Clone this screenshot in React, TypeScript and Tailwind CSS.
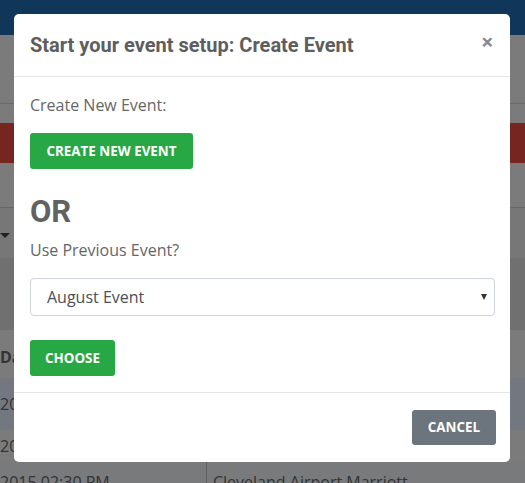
import React from "react";

export default function App() {
  return (
    <div className="relative w-[525px] h-[483px] overflow-hidden bg-[#7b7b7b] font-['Open_Sans',sans-serif]">
      {/* background page (dimmed) */}
      <div className="flex flex-col">
        <div className="h-[35px] bg-[#10375a]" />
        <div className="h-[69px] bg-[#7b7b7b] border-b border-[#6a6a6a]" />
        <div className="h-[19px] bg-[#7b7b7b]" />
        <div className="h-[40px] bg-[#772520]" />
        <div className="h-[45px] bg-[#7b7b7b] border-b border-[#666]" />
        <div className="h-[50px] bg-[#777] relative">
          <div className="absolute left-0 top-[25px] w-0 h-0 border-l-[5px] border-r-[5px] border-t-[5px] border-l-transparent border-r-transparent border-t-[#222]" />
        </div>
        <div className="h-[72px] bg-[#707070]" />
        <div className="h-[48px] bg-[#7b7b7b] flex items-center text-[16px] font-bold text-[#333] pt-[6px]">Da</div>
        <div className="h-[52px] bg-[#737880] flex items-center text-[16px] text-[#333]">20</div>
        <div className="h-[32px] bg-[#7b7b7b] flex items-center text-[16px] text-[#333]">20</div>
        <div className="h-[21px] bg-[#787a7b] flex text-[16px] text-[#333]">
          <div className="w-[207px] border-r border-[#5f5f5f] pt-[12px] leading-none">2015 02:30 PM</div>
          <div className="pl-[6px] pt-[12px] leading-none">Cleveland Airport Marriott</div>
        </div>
      </div>

      {/* modal */}
      <div className="absolute left-[14px] top-[14px] w-[496px] h-[448px] bg-white rounded-[5px] flex flex-col">
        <div className="h-[63px] border-b border-[#e5e5e5] flex items-center justify-between px-[16px]">
          <div className="font-['Roboto',sans-serif] font-bold text-[20px] text-[#5e5e5e]">Start your event setup: Create Event</div>
          <div className="text-[#8a8a8a] text-[21px] font-bold leading-none mr-[1px] mt-[-6px] font-['Roboto',sans-serif]">×</div>
        </div>
        <div className="pl-[16px] pr-[15px] pt-[16px] pb-[16px] border-b border-[#e5e5e5]">
          <div className="text-[16px] text-[#666] leading-[24px]">Create New Event:</div>
          <button className="block mt-[16px] h-[36px] px-[16.5px] bg-[#28a745] text-white text-[13.4px] font-bold rounded-[3px]">CREATE NEW EVENT</button>
          <div className="mt-[25px] font-['Roboto',sans-serif] font-bold text-[31px] leading-[36px] text-[#626262]">OR</div>
          <div className="mt-[8px] text-[16px] text-[#666] leading-[24px]">Use Previous Event?</div>
          <div className="mt-[16px] h-[38px] border border-[#ced4da] rounded-[4px] flex items-center justify-between pl-[16px] pr-[7px]">
            <span className="text-[16px] text-[#495057]">August Event</span>
            <span className="w-0 h-0 border-l-[3px] border-r-[3px] border-t-[6px] border-l-transparent border-r-transparent border-t-[#333]" />
          </div>
          <button className="block mt-[24px] h-[36px] px-[15px] bg-[#28a745] text-white text-[13.4px] font-bold rounded-[3px]">CHOOSE</button>
        </div>
        <div className="flex justify-end pl-[15px] pr-[14px] pt-[17px]">
          <button className="h-[35px] px-[16px] bg-[#6c757d] text-white text-[13.4px] font-bold rounded-[3px]">CANCEL</button>
        </div>
      </div>
    </div>
  );
}
